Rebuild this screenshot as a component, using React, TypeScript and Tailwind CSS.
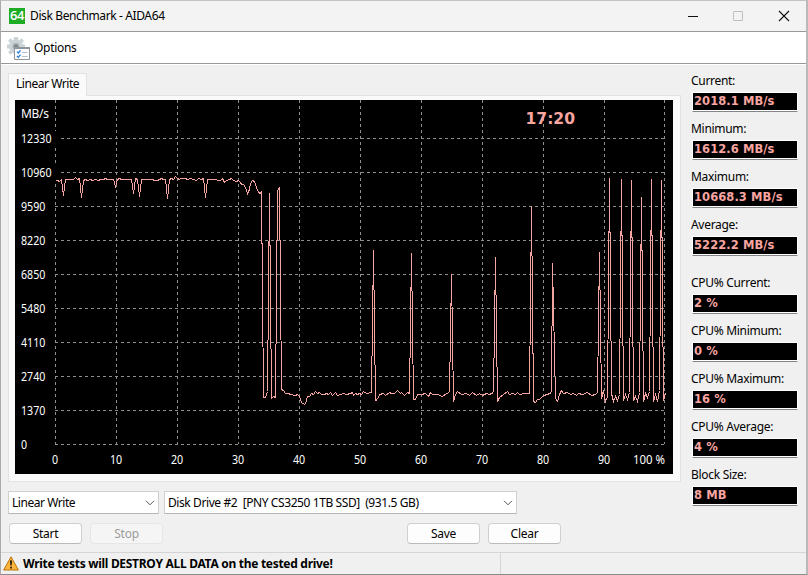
import React from "react";

interface Reading {
  label: string;
  value: string;
}

const speedReadings: Reading[] = [
  { label: "Current:", value: "2018.1 MB/s" },
  { label: "Minimum:", value: "1612.6 MB/s" },
  { label: "Maximum:", value: "10668.3 MB/s" },
  { label: "Average:", value: "5222.2 MB/s" },
];

const cpuReadings: Reading[] = [
  { label: "CPU% Current:", value: "2 %" },
  { label: "CPU% Minimum:", value: "0 %" },
  { label: "CPU% Maximum:", value: "16 %" },
  { label: "CPU% Average:", value: "4 %" },
  { label: "Block Size:", value: "8 MB" },
];

const gridX = [55, 116, 177, 238, 299, 360, 421, 482, 543, 604, 664];
const gridY = [138, 172, 206, 240, 274, 308, 342, 376, 410, 444];
const yLabels = ["12330", "10960", "9590", "8220", "6850", "5480", "4110", "2740", "1370", "0"];
const xLabels = ["0", "10", "20", "30", "40", "50", "60", "70", "80", "90"];

const trace = `
  55,180 57,180 59,181 60,180 61,179 63,195 65,179 73,179 75,177 77,179 79,178 81,197 83,180 85,179 87,180 90,179
  92,180 95,179 98,180 100,179 103,179 105,178 107,179 113,179 115,186 117,179 119,178 121,179 131,179 133,193 135,178
  137,179 139,196 141,179 152,179 154,180 157,180 161,178 163,179 165,179 167,198 169,179 171,178 173,179 175,176
  177,178 179,179 180,178 185,178 187,179 190,178 193,179 196,180 198,178 201,179 203,178 205,197 207,179 215,179
  218,180 220,180 222,178 224,182 226,180 229,179 231,178 233,180 236,181 238,180 240,182 241,184 243,184 245,187
  247,193 249,189 250,183 252,180 254,181 256,187 258,192 260,193 261,191 263,397 265,397 267,391 269,193 271,398
  273,396 275,397 277,190 279,187 281,389 283,390 285,393 288,393 290,394 295,395 297,394 299,396 301,402 304,404
  305,403 307,396 309,396 311,393 313,394 315,391 317,393 319,392 321,394 324,394 326,393 328,394 330,392 332,395
  335,392 337,395 340,394 343,393 346,394 350,393 352,392 353,395 355,393 357,394 359,393 361,394 363,391 366,393
  371,392 373,250 375,400 377,399 379,394 383,393 385,395 389,392 391,393 394,393 397,390 400,393 401,392 404,395
  407,392 409,393 411,253 413,399 415,399 417,394 421,394 425,393 428,396 430,392 432,394 437,394 442,396 446,393
  449,392 451,274 453,401 455,394 457,391 461,394 466,393 469,395 472,392 476,395 479,393 482,395 486,393 489,394
  493,392 495,257 497,401 499,397 503,394 507,391 509,394 512,393 515,394 517,392 519,394 524,393 529,393 531,206
  533,401 535,402 537,399 539,399 541,397 543,395 547,394 551,392 552,263 555,398 557,401 559,394 561,390 563,393
  567,392 570,394 573,393 576,395 578,393 582,394 587,392 591,395 595,394 597,392 599,252 601,398 603,390 604,397
  605,401 607,396 609,178 611,393 613,401 615,396 617,400 619,394 621,179 623,400 625,394 627,399 629,392 631,180
  633,400 635,396 637,401 639,392 641,197 643,401 645,393 647,397 649,391 651,179 653,401 655,394 657,401 659,390
  661,180 663,400 665,393`;

const Chart: React.FC = () => (
  <svg width="658" height="374" viewBox="15 100 658 374" className="block bg-black">
    <g stroke="#8f8f8f" strokeDasharray="3 3" shapeRendering="crispEdges">
      {gridX.map((x) => (
        <line key={x} x1={x + 0.5} x2={x + 0.5} y1="100" y2="444" />
      ))}
      {gridY.map((y) => (
        <line key={y} x1="55" x2="665" y1={y + 0.5} y2={y + 0.5} />
      ))}
    </g>
    {/* Wide axis labels clear the grid behind them */}
    <rect x="20" y="131" width="40" height="16" />
    <rect x="20" y="165" width="40" height="16" />
    <g fill="#fff" fontSize="12">
      <text x="21" y="118" textLength="28">MB/s</text>
      {yLabels.map((label, i) => (
        <text key={label} x="21" y={gridY[i] + 5} textLength={label.length * 6.1} lengthAdjust="spacingAndGlyphs">
          {label}
        </text>
      ))}
      {xLabels.map((label, i) => (
        <text
          key={label}
          x={gridX[i]}
          y="464"
          textAnchor="middle"
          textLength={label.length * 6.1}
          lengthAdjust="spacingAndGlyphs"
        >
          {label}
        </text>
      ))}
      <text x="633" y="464" textLength="32" lengthAdjust="spacingAndGlyphs">100 %</text>
    </g>
    <polyline
      points={trace}
      transform="translate(.5 .5)"
      fill="none"
      stroke="#f5a5a0"
      shapeRendering="crispEdges"
    />
    <text x="525.5" y="124" fill="#f9a5a1" fontSize="16" fontWeight="700" fontFamily="DejaVu Sans" textLength="49.5" lengthAdjust="spacingAndGlyphs">
      17:20
    </text>
  </svg>
);

const ReadingBox: React.FC<Reading> = ({ label, value }) => (
  <div className="h-12">
    <div className="-ml-px h-[19px] leading-4 tracking-[-0.3px] whitespace-nowrap">{label}</div>
    <div className="h-5 w-[106px] border border-white border-b-[#858585] bg-black">
      <div className="h-[17px] pl-px font-['DejaVu_Sans'] text-[11.5px] leading-[17px] font-bold tracking-[0.08px] whitespace-nowrap text-[#f9a5a1]">
        {value}
      </div>
      <div className="h-px bg-white" />
    </div>
  </div>
);

const Select: React.FC<{ text: string; className: string }> = ({ text, className }) => (
  <div
    className={`flex h-[23px] items-center justify-between border border-[#d0d0d0] border-b-[#b5b5b5] bg-white pr-[3px] pl-[3px] whitespace-pre ${className}`}
  >
    <span>{text}</span>
    <svg width="10" height="6" viewBox="0 0 10 6" fill="none" stroke="#555">
      <path d="M1 .8 5 4.8 9 .8" />
    </svg>
  </div>
);

const Button: React.FC<{ children: string; disabled?: boolean }> = ({ children, disabled }) => (
  <button
    disabled={disabled}
    className="h-[21px] w-[73px] rounded-[4px] border border-[#d0d0d0] border-b-[#bababa] bg-[#fdfdfd] text-center leading-[19px] tracking-[-0.25px] disabled:border-[#e6e6e6] disabled:bg-[#f5f5f5] disabled:text-[#9c9c9c]"
  >
    {children}
  </button>
);

const GearIcon: React.FC = () => (
  <svg width="24" height="24" viewBox="0 0 24 24">
    <g fill="#ccd3d6">
      <circle cx="9" cy="10.5" r="7" />
      <path d="M7 1h4l.7 4H6.3zM7 20h4l.7-4H6.3zM0 8.5h3v4H0zM15 8.5h3v4h-3zM1 5 3.5 2.2 6.5 5 3.8 7.5zM14.5 2.2 17 5 14.5 7.5 11.7 5zM1 16 3.5 18.8 6.5 16 3.8 13.5z" />
    </g>
    <circle cx="9" cy="10.5" r="3.4" fill="#a9b1b5" />
    <circle cx="9" cy="10.5" r="2.2" fill="#7f888c" />
    <path d="M7.5 11.5h15v12h-15z" fill="#fafcff" stroke="#8d959b" />
    <path d="M7 11h16v2H7z" fill="#8f979c" />
    <path d="m10 15.7 1.3 1.3 2.2-2.7M10 20l1.3 1.3 2.2-2.7" fill="none" stroke="#1e77d3" strokeWidth="1.2" />
    <path d="M15 16.5h5.5M15 20.5h5.5" stroke="#b8bec3" />
  </svg>
);

const WarningIcon: React.FC = () => (
  <svg width="16" height="15" viewBox="0 0 16 15">
    <path d="M8 .8 15.4 14H.6z" fill="#fbb43c" stroke="#b9720f" strokeLinejoin="round" />
    <path d="M7 4.5h2l-.4 5H7.4zM7.2 10.7h1.6v1.7H7.2z" fill="#111" />
  </svg>
);

export default function App() {
  return (
    <div className="flex h-[575px] w-[808px] flex-col overflow-hidden border-t border-r-2 border-b border-l border-t-[#c4c2c2] border-r-[#b9b9b9] border-b-[#8c8c8c] border-l-[#aaa] bg-[#f0f0f0] font-['Noto_Sans'] text-[12px] text-black">
      {/* Title bar */}
      <header className="flex h-[31px] items-center border-b border-[#999] bg-[#f3f3f3] pl-2">
        <div className="h-4 w-4 bg-[#1eac26] text-center font-['Open_Sans'] text-[13px] leading-[15px] font-semibold tracking-[-0.4px] text-white">64</div>
        <h1 className="ml-[5px] tracking-[-0.38px]">Disk Benchmark - AIDA64</h1>
        <svg className="ml-auto" width="124" height="16" viewBox="682 7 124 16" fill="none" stroke="#111">
          <path d="M688 15.5h10" />
          <rect x="733.5" y="10.5" width="9" height="9" rx=".5" stroke="#bfbfbf" />
          <path d="m779 10 10 10M789 10l-10 10" strokeWidth="1.1" />
        </svg>
      </header>

      {/* Menu */}
      <nav className="flex h-8 items-center border-b border-[#999] bg-white pl-[6px]">
        <GearIcon />
        <span className="ml-[3px] tracking-[-0.3px]">Options</span>
      </nav>

      <main className="flex h-[488px] border-t border-white">
        <section className="w-[683px] pt-2 pl-[7px]">
          <div className="relative z-10 h-[23px] w-[79px] border border-b-0 border-[#e2e2e2] bg-[#fafafa] pl-[7px] leading-[20px] tracking-[-0.45px] whitespace-nowrap">
            Linear Write
          </div>
          <div className="-mt-px h-[387px] w-[673px] border border-[#e2e2e2] bg-[#fafafa] pt-1 pl-[6px]">
            <Chart />
          </div>
          <div className="mt-[9px] flex gap-[5px]">
            <Select text="Linear Write" className="w-[151px] tracking-[-0.45px]" />
            <Select text="Disk Drive #2  [PNY CS3250 1TB SSD]  (931.5 GB)" className="w-[353px] tracking-[-0.41px]" />
          </div>
          <div className="mt-[9px] flex gap-2 pl-px">
            <Button>Start</Button>
            <Button disabled>Stop</Button>
            <div className="w-[228px]" />
            <Button>Save</Button>
            <Button>Clear</Button>
          </div>
        </section>
        <aside className="pt-2 pl-2">
          {speedReadings.map((r) => (
            <ReadingBox key={r.label} {...r} />
          ))}
          <div className="h-[10px]" />
          {cpuReadings.map((r) => (
            <ReadingBox key={r.label} {...r} />
          ))}
        </aside>
      </main>

      <footer className="flex flex-1 border-t border-[#d5d5d5]">
        <div className="flex w-[500px] items-center border-r border-[#d5d5d5] pl-[2px]">
          <WarningIcon />
          <span className="ml-1 font-bold tracking-[-0.29px] whitespace-nowrap">
            Write tests will DESTROY ALL DATA on the tested drive!
          </span>
        </div>
      </footer>
    </div>
  );
}
